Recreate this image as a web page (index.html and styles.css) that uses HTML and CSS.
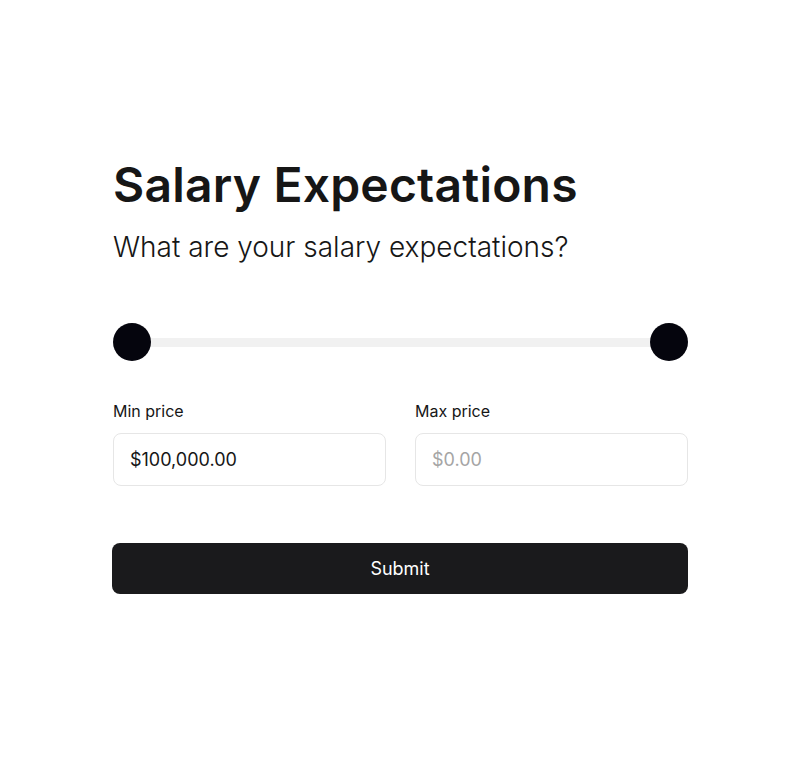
FILE: index.html
```html
<!DOCTYPE html>
<html>
<head>
<meta charset="utf-8">
<link rel="stylesheet" href="styles.css">
</head>
<body>
<main class="form">
  <h1 class="title">Salary Expectations</h1>
  <p class="subtitle">What are your salary expectations?</p>
  <div class="slider">
    <div class="track"></div>
    <span class="thumb thumb-left"></span>
    <span class="thumb thumb-right"></span>
  </div>
  <div class="fields">
    <label class="field">
      <span class="label">Min price</span>
      <span class="input">$100,000.00</span>
    </label>
    <label class="field">
      <span class="label">Max price</span>
      <span class="input placeholder">$0.00</span>
    </label>
  </div>
  <button class="submit">Submit</button>
</main>
</body>
</html>
```

FILE: styles.css
```css
* { box-sizing: border-box; }
html, body { margin: 0; padding: 0; background: #fff; }
body {
  font-family: Inter, "Noto Sans", sans-serif;
  color: #161616;
}
.form {
  width: 576px;
  margin: 0 0 0 112px;
  padding-top: 153px;
  display: flex;
  flex-direction: column;
}
.title {
  margin: 0;
  font-size: 48px;
  line-height: 64px;
  font-weight: 600;
  letter-spacing: 0.2px;
  padding-left: 1px;
}
.subtitle {
  margin: 10px 0 0;
  font-size: 28px;
  line-height: 40px;
  font-weight: 300;
  letter-spacing: 0;
  padding-left: 1px;
}
.slider {
  position: relative;
  height: 38px;
  margin: 56px 0 0 1px;
}
.track {
  position: absolute;
  left: 0; right: 0;
  top: 15px;
  height: 9px;
  background: #f1f1f1;
}
.thumb {
  position: absolute;
  top: 0;
  width: 38px;
  height: 38px;
  border-radius: 50%;
  background: #05050d;
}
.thumb-left { left: 0; }
.thumb-right { right: 0; }
.fields {
  display: grid;
  grid-template-columns: 1fr 1fr;
  column-gap: 29px;
  margin: 39px 0 0 1px;
}
.field { display: flex; flex-direction: column; }
.label {
  font-size: 16px;
  line-height: 22px;
  color: #161616;
}
.input {
  margin-top: 11px;
  height: 53px;
  border: 1px solid #e6e6e6;
  border-radius: 8px;
  padding: 0 16px;
  display: flex;
  align-items: center;
  font-size: 18px;
  color: #161616;
}
.input.placeholder { color: #a5a5a5; }
.submit {
  margin-top: 57px;
  height: 51px;
  width: 576px;
  border: none;
  border-radius: 8px;
  background: #1a1a1c;
  color: #fff;
  font-family: Inter, "Noto Sans", sans-serif;
  font-size: 18px;
  font-weight: 400;
}
```
